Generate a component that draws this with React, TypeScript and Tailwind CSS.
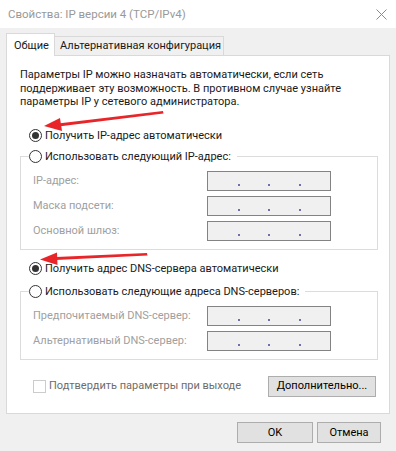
import React from "react";

function Radio({ checked, label }: { checked?: boolean; label: string }) {
  return (
    <div className="flex items-center h-[16px]">
      <span className="w-[13px] h-[13px] rounded-full border border-[#333333] bg-white flex items-center justify-center shrink-0">
        {checked && <span className="w-[7px] h-[7px] rounded-full bg-[#333333]" />}
      </span>
      <span className="ml-[3px] whitespace-nowrap">{label}</span>
    </div>
  );
}

function IpField() {
  return (
    <div className="w-[124px] h-[20px] border border-[#838383] bg-[#f0f0f0] grid grid-cols-4 shrink-0">
      {[0, 1, 2, 3].map((i) => (
        <div key={i} className="flex items-end justify-end pb-[4px]">
          {i < 3 && <span className="w-[2px] h-[2px] bg-[#7070a8] translate-x-[1px]" />}
        </div>
      ))}
    </div>
  );
}

function FieldRow({ label }: { label: string }) {
  return (
    <div className="flex items-center h-[20px]">
      <span className="w-[174px] text-[#a0a0a0] whitespace-nowrap">{label}</span>
      <IpField />
    </div>
  );
}

function Group({ legend, rows }: { legend: string; rows: string[] }) {
  return (
    <fieldset className="w-[358px] border border-[#dcdcdc]">
      <legend className="ml-[8px] pr-[6px] bg-white">
        <Radio label={legend} />
      </legend>
      <div className="pl-[12px] pt-[6px] pb-[8px] flex flex-col gap-[5px]">
        {rows.map((r) => (
          <FieldRow key={r} label={r} />
        ))}
      </div>
    </fieldset>
  );
}

function Button({ children, className }: { children: React.ReactNode; className: string }) {
  return (
    <button className={"h-[21px] border border-[#adadad] bg-[#e1e1e1] text-black flex items-center justify-center " + className}>
      {children}
    </button>
  );
}

export default function App() {
  return (
    <div className="relative w-[396px] h-[451px] overflow-hidden bg-[#f0f0f0] text-[11px] leading-[16px] text-[#1a1a1a] font-['Roboto',sans-serif] flex flex-col">
      {/* title bar */}
      <div className="h-[28px] bg-white flex items-center justify-between pl-[8px] pr-[9px] shrink-0">
        <span className="text-[#999999] text-[11.5px]">Свойства: IP версии 4 (TCP/IPv4)</span>
        <svg width="11" height="11" viewBox="0 0 11 11">
          <path d="M0.5 0.5 L10.5 10.5 M10.5 0.5 L0.5 10.5" stroke="#8a8a8a" strokeWidth="1" />
        </svg>
      </div>

      {/* tabs */}
      <div className="flex items-end pl-[6px] pt-[5px] h-[27px] shrink-0">
        <div className="relative z-10 h-[23px] -mb-px w-[49px] bg-white border border-b-0 border-[#d9d9d9] pl-[7px] pt-[4px]">
          Общие
        </div>
        <div className="h-[19px] w-[169px] border border-b-0 border-l-0 border-[#d9d9d9] pl-[5px] flex items-center whitespace-nowrap">
          Альтернативная конфигурация
        </div>
      </div>

      {/* panel */}
      <div className="ml-[6px] w-[384px] h-[359px] shrink-0 bg-white border border-[#d9d9d9] px-[13px] pt-[12px] flex flex-col">
        <p className="leading-[13.5px] whitespace-nowrap">
          Параметры IP можно назначать автоматически, если сеть
          <br />
          поддерживает эту возможность. В противном случае узнайте
          <br />
          параметры IP у сетевого администратора.
        </p>

        <div className="mt-[19px] ml-[9px]">
          <Radio checked label="Получить IP-адрес автоматически" />
        </div>
        <div className="mt-[5px]">
          <Group legend="Использовать следующий IP-адрес:" rows={["IP-адрес:", "Маска подсети:", "Основной шлюз:"]} />
        </div>

        <div className="mt-[11px] ml-[9px]">
          <Radio checked label="Получить адрес DNS-сервера автоматически" />
        </div>
        <div className="mt-[7px]">
          <Group legend="Использовать следующие адреса DNS-серверов:" rows={["Предпочитаемый DNS-сервер:", "Альтернативный DNS-сервер:"]} />
        </div>

        <div className="mt-[16px] flex items-center justify-between">
          <div className="flex items-center ml-[13px]">
            <span className="w-[13px] h-[13px] border border-[#cccccc] bg-white" />
            <span className="ml-[3px] text-[#6d6d6d]">Подтвердить параметры при выходе</span>
          </div>
          <Button className="w-[108px]">Дополнительно...</Button>
        </div>
      </div>

      {/* bottom buttons */}
      <div className="flex pl-[237px] pt-[8px] gap-[4px]">
        <Button className="w-[76px]">OK</Button>
        <Button className="w-[64px]">Отмена</Button>
      </div>

      {/* red annotation arrows */}
      <svg className="absolute inset-0 pointer-events-none" width="396" height="451" viewBox="0 0 396 451">
        <path d="M163 111 L58 123.5 L58.5 126.5 L163.5 113.5 Z" fill="#e8262a" />
        <path d="M44 126 L60 118 L62 131 Z" fill="#e8262a" />
        <path d="M147 253 L56 257 L56 260 L147.5 255.5 Z" fill="#e8262a" />
        <path d="M40 259.5 L57 252.5 L57.5 265 Z" fill="#e8262a" />
      </svg>
    </div>
  );
}
